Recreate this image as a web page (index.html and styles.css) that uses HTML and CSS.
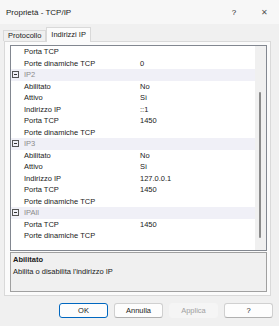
FILE: index.html
```html
<!DOCTYPE html>
<html lang="it">
  <head>
    <meta charset="UTF-8" />
    <title>Proprietà - TCP/IP</title>
    <link rel="stylesheet" href="styles.css">
  </head>
  <body>
    <div class="window">
      <div class="titlebar">
        <span class="title">Proprietà - TCP/IP</span>
        <span class="tb-help">?</span>
        <span class="tb-close">&#x2715;</span>
      </div>

      <div class="tabs">
        <div class="tab">Protocollo</div>
        <div class="tab active">Indirizzi IP</div>
      </div>

      <div class="panel">
        <div class="grid">
          <div class="rows">
            <div class="row"><span class="name">Porta TCP</span><span class="val"></span></div>
            <div class="row"><span class="name">Porte dinamiche TCP</span><span class="val">0</span></div>
            <div class="row cat"><span class="toggle"></span><span class="name">IP2</span></div>
            <div class="row"><span class="name">Abilitato</span><span class="val">No</span></div>
            <div class="row"><span class="name">Attivo</span><span class="val">Sì</span></div>
            <div class="row"><span class="name">Indirizzo IP</span><span class="val">::1</span></div>
            <div class="row"><span class="name">Porta TCP</span><span class="val">1450</span></div>
            <div class="row"><span class="name">Porte dinamiche TCP</span><span class="val"></span></div>
            <div class="row cat"><span class="toggle"></span><span class="name">IP3</span></div>
            <div class="row"><span class="name">Abilitato</span><span class="val">No</span></div>
            <div class="row"><span class="name">Attivo</span><span class="val">Sì</span></div>
            <div class="row"><span class="name">Indirizzo IP</span><span class="val">127.0.0.1</span></div>
            <div class="row"><span class="name">Porta TCP</span><span class="val">1450</span></div>
            <div class="row"><span class="name">Porte dinamiche TCP</span><span class="val"></span></div>
            <div class="row cat"><span class="toggle"></span><span class="name">IPAll</span></div>
            <div class="row"><span class="name">Porta TCP</span><span class="val">1450</span></div>
            <div class="row"><span class="name">Porte dinamiche TCP</span><span class="val"></span></div>
          </div>
          <div class="scrollbar"><div class="thumb"></div></div>
        </div>

        <div class="desc">
          <p class="desc-title">Abilitato</p>
          <p>Abilita o disabilita l'indirizzo IP</p>
        </div>
      </div>

      <div class="buttons">
        <button class="btn default">OK</button>
        <button class="btn">Annulla</button>
        <button class="btn" disabled>Applica</button>
        <button class="btn">?</button>
      </div>
    </div>
  </body>
</html>
```

FILE: styles.css
```css
* {
  box-sizing: border-box;
}
body {
  margin: 0;
  font-family: "Liberation Sans", Arial, sans-serif;
  font-size: 7.5px;
  color: #1a1a1a;
}
.window {
  width: 279px;
  height: 326px;
  background-color: #f0f0f0;
}
.titlebar {
  height: 24px;
  display: flex;
  align-items: center;
  padding: 0 0 0 6px;
  background-color: #f7f7f7;
  font-size: 8px;
}
.title {
  flex: 1;
}
.tb-help {
  width: 30px;
  text-align: center;
}
.tb-close {
  width: 30px;
  text-align: center;
  font-size: 8px;
  color: #555;
}
.tabs {
  display: flex;
  align-items: flex-end;
  height: 17px;
  padding-left: 3px;
}
.tab {
  height: 11px;
  padding: 0 4px;
  line-height: 10px;
  border: 1px solid #d9d9d9;
  border-bottom: none;
  background-color: #f0f0f0;
}
.tab.active {
  height: 15px;
  line-height: 13px;
  background-color: #fbfbfb;
  border-color: #d9d9d9;
  margin-bottom: -1px;
  position: relative;
  z-index: 1;
}
.panel {
  width: 267px;
  height: 255px;
  margin-left: 4px;
  border: 1px solid #d9d9d9;
  background-color: #fbfbfb;
  padding: 3px 3px 2px 5px;
}
.grid {
  height: 206px;
  border: 1px solid #828790;
  display: flex;
  background-color: #fff;
}
.rows {
  flex: 1;
  display: grid;
  grid-auto-rows: 11.5px;
  align-content: start;
}
.row {
  display: flex;
  align-items: center;
  padding-left: 13px;
  white-space: nowrap;
}
.row .name {
  width: 116px;
}
.row.cat {
  padding-left: 1px;
  background-color: #f0f0f7;
}
.row.cat .name {
  color: #8a8a8a;
}
.toggle {
  width: 7px;
  height: 7px;
  margin-right: 5px;
  border: 1px solid #555;
  position: relative;
}
.toggle::after {
  content: "";
  position: absolute;
  left: 1px;
  right: 1px;
  top: 2px;
  height: 1px;
  background-color: #333;
}
.scrollbar {
  width: 11px;
  background-color: #f0f0f0;
  padding-top: 46px;
}
.thumb {
  width: 2px;
  height: 146px;
  margin-left: 4px;
  background-color: #8a8a8a;
  border-radius: 1px;
}
.desc {
  height: 40px;
  margin-top: 1px;
  border: 1px solid #a0a0a0;
  padding: 2px 2px;
  background-color: #f0f0f0;
}
.desc p {
  margin: 0 0 3px 0;
}
.desc-title {
  font-weight: bold;
}
.buttons {
  display: flex;
  justify-content: flex-end;
  gap: 6px;
  padding: 7px 6px 0 0;
}
.btn {
  width: 49px;
  height: 15px;
  padding: 0;
  font-family: inherit;
  font-size: 7.5px;
  color: #1a1a1a;
  background-color: #fdfdfd;
  border: 1px solid #d0d0d0;
  border-bottom-color: #b0b0b0;
  border-radius: 3px;
}
.btn.default {
  border: 1px solid #0067c0;
}
.btn:disabled {
  color: #a0a0a0;
  background-color: #f5f5f5;
  border-color: #f5f5f5;
}
```
